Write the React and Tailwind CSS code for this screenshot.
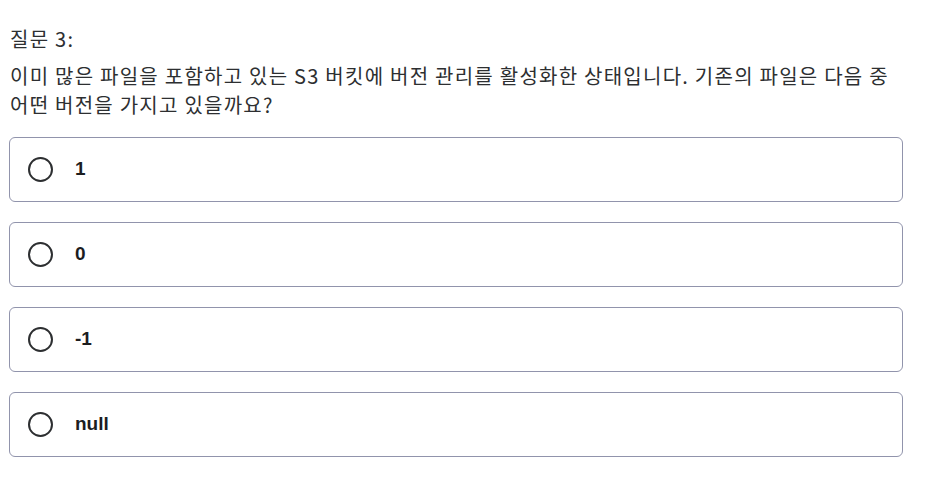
export default function App() {
  const opts = ["1", "0", "-1", "null"];
  return (
    <div className="bg-white w-[927px] h-[501px] text-[#2d2f31]">
      <div
        className="pl-[10px] w-[905px] pt-[24px] tracking-[1.25px]"
        style={{ fontFamily: "'Noto Sans CJK KR', 'Liberation Sans', sans-serif" }}
      >
        <div className="text-[20px] leading-[29px]">질문 3:</div>
        <div className="mt-[8px] text-[20px] leading-[29px]">
          이미 많은 파일을 포함하고 있는 S3 버킷에 버전 관리를 활성화한 상태입니다. 기존의 파일은 다음 중 어떤 버전을 가지고 있을까요?
        </div>
      </div>
      <div
        className="mt-[18px] ml-[9px] w-[894px] flex flex-col gap-[20px]"
        style={{ fontFamily: "'Liberation Sans', 'Noto Sans CJK KR', sans-serif" }}
      >
        {opts.map((o) => (
          <div
            key={o}
            className="h-[65px] border border-[#9194ac] rounded-[6px] flex items-center pl-[18px]"
          >
            <div className="w-[25px] h-[25px] rounded-full border-2 border-[#2d2f31]" />
            <span className="ml-[22px] text-[19px] font-bold text-[#1c1d1f]">{o}</span>
          </div>
        ))}
      </div>
    </div>
  );
}
